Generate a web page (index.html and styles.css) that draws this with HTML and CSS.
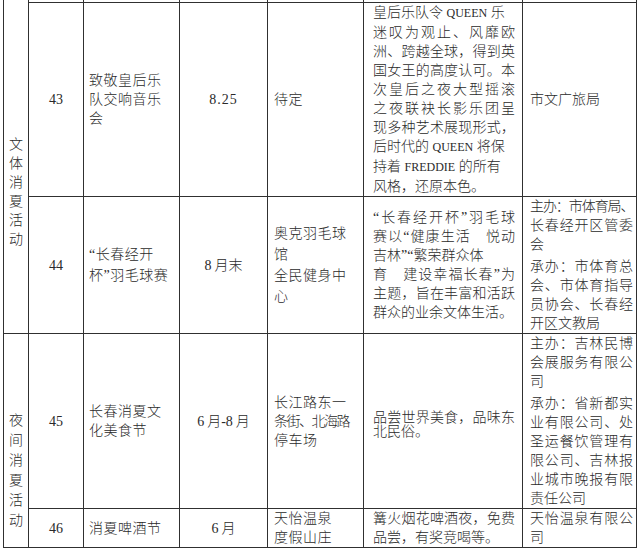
FILE: index.html
```html
<!DOCTYPE html>
<html lang="zh-CN">
<head>
<meta charset="utf-8">
<title>消夏活动</title>
<link rel="stylesheet" href="styles.css">
</head>
<body>
<table class="sheet">
<colgroup>
<col class="c-cat"><col class="c-no"><col class="c-name"><col class="c-date"><col class="c-venue"><col class="c-desc"><col class="c-org">
</colgroup>
<tbody>
<tr class="stub">
<td class="cat cat1" rowspan="3">文体消夏活动</td>
<td></td><td></td><td></td><td></td><td></td><td></td>
</tr>
<tr class="r43">
<td class="no">43</td>
<td class="name"><span class="ln">致敬皇后乐</span><span class="ln">队交响音乐</span><span class="ln">会</span></td>
<td class="date"><span class="dot">8.25</span></td>
<td class="venue"><span class="ln">待定</span></td>
<td class="desc">
<span class="ln">皇后乐队令 <span class="lat">QUEEN</span> 乐</span>
<span class="ln j">迷叹为观止、风靡欧</span>
<span class="ln j">洲、跨越全球，得到英</span>
<span class="ln j">国女王的高度认可。本</span>
<span class="ln j">次皇后之夜大型摇滚</span>
<span class="ln j">之夜联袂长影乐团呈</span>
<span class="ln j">现多种艺术展现形式，</span>
<span class="ln">后时代的 <span class="lat">QUEEN</span> 将保</span>
<span class="ln">持着 <span class="lat">FREDDIE</span> 的所有</span>
<span class="ln">风格，还原本色。</span>
</td>
<td class="org"><span class="ln">市文广旅局</span></td>
</tr>
<tr class="r44">
<td class="no">44</td>
<td class="name loose"><span class="ln">“长春经开</span><span class="ln">杯”羽毛球赛</span></td>
<td class="date"><span class="d">8</span>月末</td>
<td class="venue loose"><span class="ln">奥克羽毛球</span><span class="ln">馆</span><span class="ln">全民健身中</span><span class="ln">心</span></td>
<td class="desc">
<span class="ln j">“长春经开杯”羽毛球</span>
<span class="ln j">赛以“健康生活　悦动</span>
<span class="ln">吉林”“繁荣群众体</span>
<span class="ln j">育　建设幸福长春”为</span>
<span class="ln j">主题，旨在丰富和活跃</span>
<span class="ln">群众的业余文体生活。</span>
</td>
<td class="org">
<span class="ln j sq">主办：市体育局、</span>
<span class="ln j">长春经开区管委</span>
<span class="ln">会</span>
<span class="ln j gap">承办：市体育总</span>
<span class="ln j">会、市体育指导</span>
<span class="ln j">员协会、长春经</span>
<span class="ln">开区文教局</span>
</td>
</tr>
<tr class="r45">
<td class="cat cat2" rowspan="2">夜间消夏活动</td>
<td class="no">45</td>
<td class="name"><span class="ln">长春消夏文</span><span class="ln">化美食节</span></td>
<td class="date"><span class="d">6</span>月-<span class="d">8</span>月</td>
<td class="venue"><span class="ln">长江路东一</span><span class="ln sq">条街、北海路</span><span class="ln">停车场</span></td>
<td class="desc dense">
<span class="ln j">品尝世界美食，品味东</span>
<span class="ln">北民俗。</span>
</td>
<td class="org">
<span class="ln j">主办：吉林民博</span>
<span class="ln j">会展服务有限公</span>
<span class="ln">司</span>
<span class="ln j gap">承办：省新都实</span>
<span class="ln j">业有限公司、处</span>
<span class="ln j">圣运餐饮管理有</span>
<span class="ln j">限公司、吉林报</span>
<span class="ln j">业城市晚报有限</span>
<span class="ln">责任公司</span>
</td>
</tr>
<tr class="r46">
<td class="no">46</td>
<td class="name"><span class="ln">消夏啤酒节</span></td>
<td class="date"><span class="d">6</span>月</td>
<td class="venue"><span class="ln">天怡温泉</span><span class="ln">度假山庄</span></td>
<td class="desc">
<span class="ln j">篝火烟花啤酒夜，免费</span>
<span class="ln">品尝，有奖竞喝等。</span>
</td>
<td class="org">
<span class="ln j">天怡温泉有限公</span>
<span class="ln">司</span>
</td>
</tr>
</tbody>
</table>
</body>
</html>
```

FILE: styles.css
```css
html, body {
  margin: 0;
  padding: 0;
  background: #ffffff;
}

body {
  font-family: "Liberation Serif", "Noto Sans CJK SC", serif;
  font-size: 14px;
  line-height: 19px;
  color: #2a2a2a;
  font-weight: 300;
}

.sheet {
  border-collapse: collapse;
  table-layout: fixed;
  width: 634px;
  margin-left: 3px;
}

.c-cat { width: 25px; }
.c-no { width: 55px; }
.c-name { width: 96px; }
.c-date { width: 88px; }
.c-venue { width: 96px; }
.c-desc { width: 159px; }
.c-org { width: 114px; }

.sheet td {
  border: 1px solid #303030;
  padding: 0;
  vertical-align: middle;
  text-align: left;
}

.stub td {
  border-top: 0;
  height: 2px;
  font-size: 0;
  line-height: 0;
}

.r43 { height: 194px; }
.r44 { height: 136px; }
.r45 { height: 175px; }
.r46 { height: 38px; }

.sheet td.cat {
  vertical-align: top;
  text-align: center;
  font-size: 14px;
  padding: 0 4px;
}

.sheet td.cat1 {
  border-top: 0;
  line-height: 19px;
  padding-top: 135px;
}

.sheet td.cat2 {
  line-height: 20px;
  padding-top: 77px;
}

.sheet td.no,
.sheet td.date {
  text-align: center;
}

.sheet td.name {
  padding: 0 14px 0 5px;
  letter-spacing: 0.5px;
}

.sheet td.venue {
  padding: 0 8px 0 6px;
  letter-spacing: 0.5px;
}

.sheet td.desc {
  padding: 0 7px 0 9px;
}

.sheet td.desc.dense {
  line-height: 14px;
  padding-top: 8px;
}

.sheet td.org {
  padding: 0 3px 0 7px;
}

.loose {
  line-height: 21px;
}

.ln {
  display: block;
  white-space: nowrap;
}

.j {
  white-space: normal;
  text-align: justify;
  text-align-last: justify;
}

.sq {
  letter-spacing: -1.5px;
}

.gap {
  margin-top: 3px;
}

.lat {
  font-size: 12px;
  word-spacing: 1px;
}

.d {
  margin-right: 3px;
}

.dot {
  letter-spacing: 1px;
}
```
